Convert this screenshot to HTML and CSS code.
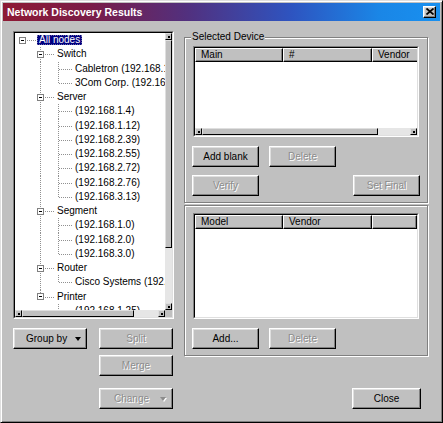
FILE: index.html
```html
<!DOCTYPE html>
<html lang="en">
<head>
<meta charset="utf-8">
<title>Network Discovery Results</title>
<link rel="stylesheet" href="styles.css">
</head>
<body>
<div class="window">
  <div class="titlebar">
    <span class="title">Network Discovery Results</span>
    <button class="tclose" aria-label="Close"><svg width="8" height="7" viewBox="0 0 8 7"><path d="M0.5 0.5 L7.5 6.5 M7.5 0.5 L0.5 6.5" stroke="#000" stroke-width="1.7" fill="none"/></svg></button>
  </div>
  <div class="client">
    <div class="leftcol">
      <div class="sunken tree">
        <div class="sunken-in tree-grid">
          <div class="tree-content">
            <div class="r"><span class="k root"><span class="bx"></span></span><span class="t sel">All nodes</span></div>
            <div class="r"><span class="c"></span><span class="k tee"><span class="bx"></span></span><span class="t">Switch</span></div>
            <div class="r"><span class="c"></span><span class="c v"></span><span class="k tee"></span><span class="t">Cabletron (192.168.1.10)</span></div>
            <div class="r"><span class="c"></span><span class="c v"></span><span class="k ell"></span><span class="t">3Com Corp. (192.168.1.20)</span></div>
            <div class="r"><span class="c"></span><span class="k tee"><span class="bx"></span></span><span class="t">Server</span></div>
            <div class="r"><span class="c"></span><span class="c v"></span><span class="k tee"></span><span class="t">(192.168.1.4)</span></div>
            <div class="r"><span class="c"></span><span class="c v"></span><span class="k tee"></span><span class="t">(192.168.1.12)</span></div>
            <div class="r"><span class="c"></span><span class="c v"></span><span class="k tee"></span><span class="t">(192.168.2.39)</span></div>
            <div class="r"><span class="c"></span><span class="c v"></span><span class="k tee"></span><span class="t">(192.168.2.55)</span></div>
            <div class="r"><span class="c"></span><span class="c v"></span><span class="k tee"></span><span class="t">(192.168.2.72)</span></div>
            <div class="r"><span class="c"></span><span class="c v"></span><span class="k tee"></span><span class="t">(192.168.2.76)</span></div>
            <div class="r"><span class="c"></span><span class="c v"></span><span class="k ell"></span><span class="t">(192.168.3.13)</span></div>
            <div class="r"><span class="c"></span><span class="k tee"><span class="bx"></span></span><span class="t">Segment</span></div>
            <div class="r"><span class="c"></span><span class="c v"></span><span class="k tee"></span><span class="t">(192.168.1.0)</span></div>
            <div class="r"><span class="c"></span><span class="c v"></span><span class="k tee"></span><span class="t">(192.168.2.0)</span></div>
            <div class="r"><span class="c"></span><span class="c v"></span><span class="k ell"></span><span class="t">(192.168.3.0)</span></div>
            <div class="r"><span class="c"></span><span class="k tee"><span class="bx"></span></span><span class="t">Router</span></div>
            <div class="r"><span class="c"></span><span class="c v"></span><span class="k ell"></span><span class="t">Cisco Systems (192.168.1.1)</span></div>
            <div class="r"><span class="c"></span><span class="k ell"><span class="bx"></span></span><span class="t">Printer</span></div>
            <div class="r"><span class="c"></span><span class="c"></span><span class="k ell"></span><span class="t">(192.168.1.25)</span></div>
          </div>
          <div class="vscroll">
            <span class="sb"><i class="dot"></i></span>
            <span class="sb vthumb"></span>
            <span class="strack"></span>
            <span class="sb"><i class="dot"></i></span>
          </div>
          <div class="hscroll">
            <span class="sb"><i class="dot"></i></span>
            <span class="sb hthumb tthumb"></span>
            <span class="strack"></span>
            <span class="sb"><i class="dot"></i></span>
          </div>
          <div class="corner"></div>
        </div>
      </div>
      <div class="lrow">
        <button class="btn drop"><span>Group by</span><i class="tri"></i></button>
        <button class="btn w74" disabled>Split</button>
      </div>
      <button class="btn w74 merge" disabled>Merge</button>
      <button class="btn drop change" disabled><span>Change</span><i class="tri"></i></button>
    </div>

    <div class="rightcol">
      <div class="group g1">
        <div class="legend">Selected Device</div>
        <div class="sunken list list1">
          <div class="sunken-in list-in">
            <div class="hdr">
              <span class="hc c1">Main</span>
              <span class="hc c2">#</span>
              <span class="hc c3">Vendor</span>
            </div>
            <div class="lbody"></div>
            <div class="hscroll">
              <span class="sb"><i class="dot"></i></span>
              <span class="sb hthumb lthumb"></span>
              <span class="strack"></span>
              <span class="sb"><i class="dot"></i></span>
            </div>
          </div>
        </div>
        <div class="brow first">
          <button class="btn w67">Add blank</button>
          <button class="btn w67" disabled>Delete</button>
        </div>
        <div class="brow second">
          <button class="btn w67" disabled>Verify</button>
          <button class="btn w67 push" disabled>Set Final</button>
        </div>
      </div>

      <div class="group g2">
        <div class="sunken list list2">
          <div class="sunken-in list-in">
            <div class="hdr">
              <span class="hc c1">Model</span>
              <span class="hc c2">Vendor</span>
              <span class="hc c4"></span>
            </div>
            <div class="lbody"></div>
          </div>
        </div>
        <div class="brow first">
          <button class="btn w67">Add...</button>
          <button class="btn w67" disabled>Delete</button>
        </div>
      </div>

      <button class="btn close">Close</button>
    </div>
  </div>
</div>
</body>
</html>
```
FILE: styles.css
```css
* { box-sizing: border-box; }
html, body { margin: 0; padding: 0; }
body {
  width: 443px;
  height: 423px;
  overflow: hidden;
  background: #c0c0c0;
  font-family: "Liberation Sans", Arial, sans-serif;
  font-size: 10px;
  color: #000;
}

.window {
  width: 443px;
  height: 423px;
  background: #c0c0c0;
  border: 1px solid;
  border-color: #dfdfdf #000 #000 #dfdfdf;
  box-shadow: inset 1px 1px #fff, inset -1px -1px #808080;
  padding: 2px;
  display: flex;
  flex-direction: column;
}

/* title bar */
.titlebar {
  height: 18px;
  flex: none;
  display: flex;
  align-items: center;
  padding: 0 4px 0 4px;
  background: linear-gradient(to right, #8e1a34 0%, #7a1c48 20%, #52307e 42%, #2e54c0 66%, #1a86e6 86%, #1890f0 100%);
  color: #fff;
}
.title {
  font-weight: bold;
  font-size: 10.5px;
}
.tclose {
  margin-left: auto;
  width: 13px;
  height: 12px;
  padding: 0;
  margin-top: -1px;
  background: #c0c0c0;
  border: 1px solid;
  border-color: #fff #000 #000 #fff;
  box-shadow: inset -1px -1px #808080, inset 1px 1px #dfdfdf;
  display: flex;
  align-items: center;
  justify-content: center;
  border-radius: 0;
}

/* client area */
.client {
  flex: 1;
  display: flex;
  padding: 10px 0 0 10px;
}
.leftcol {
  width: 161px;
  flex: none;
  display: flex;
  flex-direction: column;
  align-items: flex-start;
}
.rightcol {
  width: 244px;
  flex: none;
  margin-left: 10px;
  display: flex;
  flex-direction: column;
}

/* 3d borders */
.sunken {
  border: 1px solid;
  border-color: #808080 #fff #fff #808080;
}
.sunken-in {
  height: 100%;
  border: 1px solid;
  border-color: #000 #dfdfdf #dfdfdf #000;
}

/* tree */
.tree {
  width: 161px;
  height: 288px;
}
.tree-grid {
  display: grid;
  grid-template-columns: 1fr 7px;
  grid-template-rows: 1fr 7px;
  background: #fff;
}
.tree-content {
  overflow: hidden;
  white-space: nowrap;
  background: #fff;
  min-width: 0;
  min-height: 0;
}
.r {
  display: flex;
  align-items: center;
  height: 14.25px;
}
.c {
  width: 18px;
  flex: none;
  align-self: stretch;
}
.v {
  background: repeating-linear-gradient(to bottom, #909090 0 1px, transparent 1px 2px) 7px 0 / 1px 100% no-repeat;
}
.k {
  width: 22px;
  flex: none;
  align-self: stretch;
  display: flex;
  align-items: center;
}
.k.root {
  background: repeating-linear-gradient(to right, #909090 0 1px, transparent 1px 2px) 8px 7px / 13px 1px no-repeat;
}
.k.tee {
  background:
    repeating-linear-gradient(to right, #909090 0 1px, transparent 1px 2px) 8px 7px / 13px 1px no-repeat,
    repeating-linear-gradient(to bottom, #909090 0 1px, transparent 1px 2px) 7px 0 / 1px 100% no-repeat;
}
.k.ell {
  background:
    repeating-linear-gradient(to right, #909090 0 1px, transparent 1px 2px) 8px 7px / 13px 1px no-repeat,
    repeating-linear-gradient(to bottom, #909090 0 1px, transparent 1px 2px) 7px 0 / 1px 8px no-repeat;
}
.bx {
  width: 7px;
  height: 7px;
  margin-left: 4px;
  border: 1px solid #808080;
  background: linear-gradient(#000, #000) center / 3px 1px no-repeat, #fff;
}
.t {
  display: inline-block;
  padding: 0 2px;
  line-height: 10px;
}
.t.sel {
  background: #000080;
  color: #fff;
  outline: 1px dotted #6a6aa8;
  outline-offset: -1px;
}

/* scrollbars */
.vscroll {
  display: flex;
  flex-direction: column;
  background: #e6e6e6;
}
.hscroll {
  display: flex;
  height: 7px;
  flex: none;
  background: #e6e6e6;
}
.sb {
  width: 7px;
  height: 7px;
  flex: none;
  background: #c0c0c0;
  border: 1px solid;
  border-color: #dfdfdf #000 #000 #dfdfdf;
  display: flex;
  align-items: center;
  justify-content: center;
}
.dot {
  width: 2px;
  height: 2px;
  background: #000;
}
.strack { flex: 1; }
.vthumb { height: 208px; }
.tthumb { width: 112px; }
.lthumb { width: 176px; }
.corner { background: #c0c0c0; }

/* buttons */
.btn {
  appearance: none;
  height: 21px;
  padding: 0;
  margin: 0;
  font-family: inherit;
  font-size: 10px;
  color: #000;
  background: #c0c0c0;
  border: 1px solid;
  border-color: #fff #000 #000 #fff;
  box-shadow: inset -1px -1px #808080, inset 1px 1px #dfdfdf;
  border-radius: 0;
  display: flex;
  align-items: center;
  justify-content: center;
  flex: none;
}
.btn:disabled {
  color: #8c8c8c;
  text-shadow: 1px 1px #fff;
}
.w74 { width: 74px; }
.w67 { width: 67px; }
.drop {
  width: 74px;
  justify-content: space-between;
  padding: 0 5px 0 12px;
}
.tri {
  width: 0;
  height: 0;
  border-left: 3.5px solid transparent;
  border-right: 3.5px solid transparent;
  border-top: 4px solid #000;
}
.btn:disabled .tri {
  border-top-color: #8c8c8c;
  filter: drop-shadow(1px 1px 0 #fff);
}
.change {
  margin-top: 12px;
  margin-left: 86px;
  padding: 0 6px 0 14px;
}
.lrow {
  display: flex;
  gap: 12px;
  margin-top: 9px;
}
.merge {
  margin-top: 6px;
  margin-left: 86px;
}

/* group boxes */
.group {
  border: 1px solid #808080;
  box-shadow: inset 1px 1px #fff, 1px 1px #fff;
  padding: 0 7px 6px;
}
.g1 { margin-top: 6px; }
.g2 { margin-top: 2px; padding-top: 7px; }
.legend {
  width: max-content;
  height: 12px;
  line-height: 12px;
  margin: -7px 0 0 -1px;
  padding: 0 1px;
  background: #c0c0c0;
}

/* list views */
.list { margin: 0 1px; }
.list1 { height: 91px; margin-top: 3px; }
.list2 { height: 106px; }
.list-in {
  background: #fff;
  display: flex;
  flex-direction: column;
  overflow: hidden;
}
.hdr {
  display: flex;
  height: 14px;
  flex: none;
  overflow: hidden;
}
.hc {
  height: 14px;
  flex: none;
  line-height: 12px;
  padding-left: 5px;
  white-space: nowrap;
  overflow: hidden;
  background: #c0c0c0;
  border: 1px solid;
  border-color: #fff #000 #000 #fff;
  box-shadow: inset -1px -1px #808080;
}
.c1 { width: 88px; }
.c2 { width: 89px; }
.c3 { width: 60px; }
.c4 { flex: 1; }
.lbody { flex: 1; background: #fff; }

.brow {
  display: flex;
  gap: 10px;
}
.brow.first { margin-top: 9px; }
.brow.second { margin-top: 8px; }
.push { margin-left: auto; }

.close {
  width: 69px;
  align-self: flex-end;
  margin-right: 7px;
  margin-top: 32px;
}
```
